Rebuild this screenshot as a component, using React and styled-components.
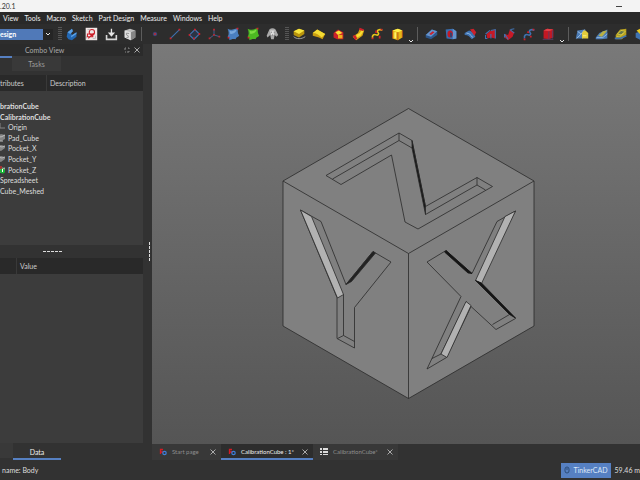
import React, {useState} from "react";
import styled, {createGlobalStyle} from "styled-components";

const menus = ["View", "Tools", "Macro", "Sketch", "Part Design", "Measure", "Windows", "Help"];

const treeItems = [
    {label: "brationCube", bold: true},
    {label: "CalibrationCube", bold: true},
    {label: "Origin", icon: "origin"},
    {label: "Pad_Cube", icon: "pad"},
    {label: "Pocket_X", icon: "pocket"},
    {label: "Pocket_Y", icon: "pocket"},
    {label: "Pocket_Z", icon: "tip"},
    {label: "Spreadsheet"},
    {label: "Cube_Meshed"},
];

const BLUE = "#3f72b0";
const RED = "#cc202a";
const YELLOW = "#e8c61c";

// toolbar drawings, all on a 16x16 grid
const icons = {
    body: (
        <>
            <path d="M3 6l5-4 1 3-2 2 1 2 5-3v5l-5 4-4-1-2-3z" fill="#2368b4"/>
            <path d="M3 6l5-4 1 3-3 3M7 10l6-4v2l-6 4z" fill="#5ba0e4"/>
        </>
    ),
    sketch: (
        <>
            <rect x="2" y="1" width="13" height="14" fill="#f1e7e7"/>
            <path d="M4 3h3M10 13h3v-3M3 13V10" stroke="#b8b8b8" fill="none"/>
            <circle cx="9" cy="6" r="3" fill="none" stroke={RED} strokeWidth="1.2"/>
            <path d="M4 8h6v3H4zM11 7l-6 6" fill="none" stroke={RED} strokeWidth="1.2"/>
        </>
    ),
    attach: (
        <>
            <path d="M3 9v5h11V9" fill="none" stroke="#d6d6d6" strokeWidth="1.8"/>
            <path d="M8.500 2v5M6 7l2.500 3L11 7z" fill="#e6e6e6" stroke="#e6e6e6" strokeWidth="1.5"/>
        </>
    ),
    cube: (
        <>
            <path d="M2 4l6-2 6 2v8l-5 3-7-3z" fill="#bdbdbd"/>
            <path d="M2 4l7 2v9l-7-3z" fill="#e0e0e0"/>
            <path d="M9 6l5-2v8l-5 3z" fill="#858585"/>
            <path d="M7 7.500L4 7v2l2 1v2H4" fill="none" stroke="#8d8d8d"/>
        </>
    ),
    point: <circle cx="8" cy="8" r="2" fill="#a52f42" stroke="#344b80"/>,
    line: (
        <>
            <path d="M3 13L13 3" stroke={BLUE} strokeWidth="1.2"/>
            <path d="M2 12h2v2H2zM12 2h2v2h-2z" fill={RED}/>
        </>
    ),
    plane: (
        <>
            <path d="M3 9l6-6 5 5-6 6z" fill="#2b3444" stroke={BLUE} strokeWidth="1.3"/>
            <path d="M2 8h2v2H2zM8 2h2v2H8zM13 7h2v2h-2zM7 12h2v2H7z" fill={RED}/>
        </>
    ),
    axes: (
        <>
            <path d="M8 9V3M8 9l-5 4M8 9l6 2" fill="none" stroke="#44669a"/>
            <path d="M7 2h2v2H7zM2 12h2v2H2zM13 10h2v2h-2zM7 8h2v2H7z" fill="#b72833"/>
        </>
    ),
    blueBinder: (
        <>
            <path d="M2 2c3 2 7 1 12-1-1 3-1 6 1 9-2 2-3 1-4 4-3-1-5 0-7 1 0-3-1-4-2-4 2-3 1-6 0-9z" fill="#4a80c0"/>
            <path d="M4 4c3 2 5 0 8-1-1 4-4 5-7 5z" fill="#79a8dc"/>
            <path d="M12 1h2v2h-2zM2 11h2v2H2z" fill={RED}/>
        </>
    ),
    greenBinder: (
        <>
            <path d="M2 2c3 2 7 1 12-1-1 3-1 6 1 9-2 2-3 1-4 4-3-1-5 0-7 1 0-3-1-4-2-4 2-3 1-6 0-9z" fill="#4cb922"/>
            <path d="M4 4c3 2 5 0 8-1-1 4-4 5-7 5z" fill="#7cdc42"/>
            <path d="M12 1h2v2h-2zM2 11h2v2H2z" fill={RED}/>
        </>
    ),
    clone: (
        <>
            <path d="M5 3c2-2 5-2 7 0l3 6-2 2-2-2-1 5H7L6 9l-3 3-1-2z" fill="#aaa"/>
            <path d="M6 4h5l-1 5H7z" fill="#ddd"/>
            <path d="M7 6h1M10 6h1M8 9h1" stroke="#666"/>
        </>
    ),
    pad: (
        <>
            <path d="M2 11c3 3 9 3 13 0" fill="none" stroke="#aaa"/>
            <path d="M2 5l6-3 6 2v4l-6 4-6-3z" fill="#b8930c"/>
            <path d="M2 5l6-3 6 2-6 4z" fill="#f6e43c"/>
        </>
    ),
    revolution: (
        <>
            <path d="M1 7l5-4 9 5-3 6-4-2-7-2z" fill="#c99d10"/>
            <path d="M1 7l5-4 9 5-4 4C8 9 5 7 1 7z" fill="#f4dc34"/>
        </>
    ),
    loftAdd: (
        <>
            <path d="M3 7l5-4 6 3v8H7l-4-2z" fill={RED}/>
            <path d="M5 6l4-2 4 3-5 2z" fill="#f8e034"/>
            <path d="M8 9h5v4H8z" fill="#eeb11c"/>
        </>
    ),
    pipeAdd: (
        <>
            <path d="M2 11l6-4 2-5 5 2-2 6-7 5z" fill="#d7a414"/>
            <path d="M10 1l5 2-2 2-4-2zM2 10l3-1 2 4-2 2z" fill={RED}/>
            <path d="M6 9l4-2 2-3 2 1-3 5-4 2z" fill="#f8e034"/>
        </>
    ),
    helixAdd: (
        <>
            <path d="M3 13c-1-4 2-5 4-4s4-1 2-3 2-4 5-2" fill="none" stroke={YELLOW} strokeWidth="1.8"/>
            <path d="M2 12h2v2H2zM6 4h2v3H6zM12 2h2v2h-2zM10 10h2v3h-2z" fill={RED}/>
        </>
    ),
    boxAdd: (
        <>
            <path d="M3 4l6-2 5 2v8l-5 3-6-2z" fill="#e7b516"/>
            <path d="M3 4l6-2 5 2-5 2z" fill="#fff04a"/>
            <path d="M9 6v9M3 4v9M14 4v8" stroke="#b54b1c"/>
            <path d="M6 6v7" stroke="#fff06b" strokeWidth="2"/>
        </>
    ),
    pocket: (
        <>
            <path d="M2 9l7-6 6 2v4l-7 5-6-2z" fill="#2c568c"/>
            <path d="M2 9l7-6 6 2-7 6z" fill="#6594cc"/>
            <path d="M6 8l4-3 2 1-4 3z" fill={RED}/>
        </>
    ),
    hole: (
        <>
            <path d="M2 3l8-1 4 3v8l-4 1-7-1z" fill="#386eaf"/>
            <path d="M10 2l4 3v8l-4 1z" fill="#6494cc"/>
            <ellipse cx="7" cy="8" rx="3" ry="4" fill="#c31926"/>
            <path d="M7 6v5l2 1V7z" fill="#274775"/>
        </>
    ),
    groove: (
        <>
            <path d="M2 7l5-3c3 1 6 3 7 7l-4 3C8 11 6 9 2 9z" fill={BLUE}/>
            <path d="M8 3l4-1 3 4-2 4z" fill={RED}/>
            <path d="M4 7c3 0 5 2 7 5" fill="none" stroke="#9bc3ed"/>
        </>
    ),
    loftCut: (
        <>
            <path d="M4 8l5-4 5-1v10l-5-1-4 1z" fill="#c71926"/>
            <path d="M3 8l5-4M9 4l5-1v10M3 9v4h2M9 8v5" fill="none" stroke={BLUE} strokeWidth="1.2"/>
        </>
    ),
    pipeCut: (
        <>
            <path d="M3 8l4 1 2-6 5 3-2 5-5 4-4-3z" fill="#c71926"/>
            <path d="M3 8l4 6M9 3l5 4M10 3l4-1M3 8v4" fill="none" stroke={BLUE} strokeWidth="1.2"/>
        </>
    ),
    helixCut: (
        <>
            <path d="M3 13c-1-4 2-5 4-4s4-1 2-3 2-4 5-2" fill="none" stroke={BLUE} strokeWidth="1.8"/>
            <path d="M2 13h2v2H2zM6 5h2v2H6zM12 2h2v2h-2zM9 10h2v2H9z" fill={RED}/>
        </>
    ),
    boxCut: (
        <>
            <path d="M3 4l4-2 7 1v9l-5 2-6-1z" fill="#c31824"/>
            <path d="M3 4l4-2 7 1-5 2z" fill="#e24047"/>
            <path d="M9 5v9M13 4v9M2 14h12" stroke="#5b3f66"/>
        </>
    ),
    fillet: (
        <>
            <path d="M1 13l2-9 8-1 2 4-4 6z" fill="#4c7cb5"/>
            <path d="M3 5l4 3 4-5M2 13l5-5" fill="none" stroke="#a4c4e5"/>
            <path d="M8 7l2-3h2l3 3v6H8z" fill="#e2cc3c"/>
            <path d="M9 10h4" stroke="#fff38a"/>
        </>
    ),
    chamfer: (
        <>
            <path d="M1 12l4-5 9-4v10l-7 1H1z" fill="#4c7cb5"/>
            <path d="M4 10l5-5 5-1-6 7z" fill="#b8b044"/>
            <path d="M2 12h7l5-4" fill="none" stroke="#92b8e0"/>
        </>
    ),
    draft: (
        <>
            <path d="M2 9l5-6 7-1v7l-5 5H2z" fill="#b7a020"/>
            <path d="M4 8l4-4 5 1-5 4zM3 11l5-1 3-3" fill="#66784a" stroke="#dccc40"/>
            <path d="M1 13h6l7-3" fill="none" stroke={BLUE} strokeWidth="2"/>
        </>
    ),
    thickness: (
        <>
            <path d="M2 7l5-2 7 2v6l-6 2-6-3z" fill={BLUE}/>
            <path d="M3 4l4-2 5 3-4 4z" fill={YELLOW}/>
        </>
    ),
};

const toolGroups = [
    {width: 74, before: "handle", names: ["body", "sketch", "attach", "cube"]},
    {width: 133, before: "line", names: ["point", "line", "plane", "axes", "blueBinder", "greenBinder", "clone"]},
    {width: 114, before: "handle", names: ["pad", "revolution", "loftAdd", "pipeAdd", "helixAdd", "boxAdd"], more: true},
    {width: 133, before: "line", names: ["pocket", "hole", "groove", "loftCut", "pipeCut", "helixCut", "boxCut"], more: true},
    {width: 75, before: "line", names: ["fillet", "chamfer", "draft", "thickness"]},
];

function TreeIcon({kind}) {
    if (kind === "origin")
        return <svg width="5" height="8" viewBox="3 0 5 8"><path d="M3 0v5h5" fill="none" stroke="#858585"/></svg>;
    if (kind === "pad")
        return (
            <svg width="5" height="8" viewBox="3 0 5 8">
                <path d="M0 2l4-2 4 1v4L4 7 0 6z" fill="#858585"/>
                <path d="M0 2l4 1 4-2M0 7h6" fill="none" stroke="#bdbdbd"/>
            </svg>
        );
    return (
        <svg width="5" height="8" viewBox="3 0 5 8">
            <path d="M0 2l4-1 4 1v2L4 7 0 6z" fill="#858585"/>
            <path d="M1 2l4 1 3-1" fill="none" stroke="#b5b5b5"/>
            {kind === "tip" && (
                <>
                    <path d="M0 0h5v3H0z" fill="#a33232"/>
                    <circle cx="5.500" cy="5" r="2.500" fill="#16b834"/>
                    <path d="M5.500 3v3" stroke="#fff"/>
                </>
            )}
        </svg>
    );
}

function FreeCadLogo() {
    return (
        <svg width="8" height="8" viewBox="0 0 8 8">
            <path d="M1.500 6V1.500H4M1.500 4H4" fill="none" stroke="#d41b24" strokeWidth="1.3"/>
            <circle cx="5.500" cy="5" r="1.700" fill="none" stroke="#3e7fda" strokeWidth="1.2"/>
        </svg>
    );
}

function SheetLogo() {
    return (
        <svg width="8" height="8" viewBox="0 0 8 8">
            <path d="M0 0h2v2H0zM3 0h5v2H3zM0 3h2v2H0zM3 3h5v2H3zM0 6h2v1H0zM3 6h5v1H3z" fill="#ddd"/>
        </svg>
    );
}

function Close() {
    return <svg width="6" height="6" viewBox="0 0 6 6"><path d="M0.500 0.500l5 5M5.500 0.500l-5 5" stroke="#aaa"/></svg>;
}

function Chevron() {
    return <svg width="6" height="4" viewBox="0 0 6 4"><path d="M1 1l2 2 2-2" fill="none" stroke="#e8e8e8"/></svg>;
}

function Cube() {
    return (
        <Scene viewBox="152 44 488 400" preserveAspectRatio="xMidYMid slice" role="img" aria-label="Calibration cube">
            <g fill="#808080" stroke="#2a2a2a" strokeWidth="0.8" strokeLinejoin="round">
                <path d="M283 181L408.500 108.500 534 181V326L408.500 398.500 283 326z"/>
                <path d="M283 181l125.500 72.500L534 181M408.500 253.500v145" fill="none"/>

                {/* Z on the top face */}
                <path d="M326 175.500L399 133l13 7.500 13.500 66L477 177.500l15.500 9-74.500 42.500-13-7-13.500-67L341 184.500z"/>
                <path d="M332.500 179L399 140.500l13 7.500M399 133v7.500M425.500 214.500L477 185l8.500 5M477 177.500v7.500" fill="none"/>
                <path d="M412 140.500v7.500l13.500 66.500v-8z" fill="#151515"/>

                {/* Y on the left face */}
                <path d="M300.500 210l20.500 11.500 25 63 27-33 18 10.500-36.500 45.500v40.500l-17.500-9.500v-41z"/>
                <path d="M343.500 294v41.500l11 6M343.500 335.500l-6 3" fill="none"/>
                <path d="M300.500 210l11 6.500 32 78-6 3.500z" fill="#b2b2b2"/>
                <path d="M346 284.500l27-33 2.500 1.500-24 28.500z" fill="#222"/>

                {/* X on the right face */}
                <path d="M515.500 211L497 221.500l-25 52-26-23-19 11.500 34 34.500-34 72.500 19.500-11.500 24.500-51 25 23 19.500-11-38.500-37.500z"/>
                <path d="M441 354l-9 4.500M466.500 301.500L441 354M492.500 324.500l17-10" fill="none"/>
                <path d="M515.500 211l-10.500 5.500-29.500 64 6 3z" fill="#b2b2b2"/>
                <path d="M466 301.500l5 4-24 52-6-3.500z" fill="#b2b2b2"/>
                <path d="M446 250.500l-1.500 1.500 23.500 21 4 .500zM475.500 280.500l6 2.500 34 35-6-3.500z" fill="#151515" stroke="#151515"/>
            </g>
        </Scene>
    );
}

function App() {
    const [doc, setDoc] = useState(1);
    const docs = [
        {label: "Start page", logo: <FreeCadLogo/>, width: 69},
        {label: "CalibrationCube : 1*", logo: <FreeCadLogo/>, width: 92},
        {label: "CalibrationCube*", logo: <SheetLogo/>, width: 85},
    ];

    return (
        <Window>
            <GlobalStyle/>
            <TitleBar>
                <span>.20.1</span>
                <MinimizeButton aria-label="Minimize"/>
            </TitleBar>
            <MenuBar>
                {menus.map((menu) => <MenuItem key={menu}>{menu}</MenuItem>)}
            </MenuBar>
            <ToolBar>
                <WorkbenchBox>
                    <WorkbenchSelect aria-label="Workbench">
                        <option>esign</option>
                    </WorkbenchSelect>
                    <SelectArrow><Chevron/></SelectArrow>
                </WorkbenchBox>
                {toolGroups.map((group, index) => (
                    <React.Fragment key={index}>
                        {group.before === "handle" ? <Handle/> : <Separator/>}
                        <ToolGroup $width={group.width}>
                            {group.names.map((name) => (
                                <ToolButton key={name} aria-label={name}>
                                    <svg width="16" height="16" viewBox="-1 -1 18 18">{icons[name]}</svg>
                                </ToolButton>
                            ))}
                        </ToolGroup>
                        {group.more && <MoreButton aria-label="More"><Chevron/></MoreButton>}
                    </React.Fragment>
                ))}
            </ToolBar>
            <Main>
                <SidePanel>
                    <DockTitle>
                        <span>Combo View</span>
                        <DockButtons>
                            <DockButton aria-label="Float">
                                <svg width="6" height="6" viewBox="0 0 6 6"><path d="M1 3V1h1M4 1h1v1M5 4v1H3M1 5h1" fill="none" stroke="#888"/></svg>
                            </DockButton>
                            <DockButton aria-label="Close"><Close/></DockButton>
                        </DockButtons>
                    </DockTitle>
                    <DockTabs>
                        <DockTab $active $width={12} aria-label="Model"/>
                        <DockTab $width={49}>Tasks</DockTab>
                    </DockTabs>
                    <HeaderRow $first={47}>
                        <HeaderCell $divided>tributes</HeaderCell>
                        <HeaderCell>Description</HeaderCell>
                    </HeaderRow>
                    <Tree>
                        {treeItems.map((item, index) => (
                            <TreeRow key={index} $bold={item.bold}>
                                {item.icon && <TreeIcon kind={item.icon}/>}
                                {item.label}
                            </TreeRow>
                        ))}
                    </Tree>
                    <Splitter><Dashes/></Splitter>
                    <HeaderRow $first={17}>
                        <HeaderCell $divided/>
                        <HeaderCell>Value</HeaderCell>
                    </HeaderRow>
                    <Properties/>
                    <PropertyTabs>
                        <PropertyTab $width={13} aria-label="View"/>
                        <PropertyTab $width={48} $active>Data</PropertyTab>
                    </PropertyTabs>
                </SidePanel>
                <SideSplitter><Dashes $vertical/></SideSplitter>
                <Workspace>
                    <Viewport><Cube/></Viewport>
                    <DocTabs>
                        {docs.map((item, index) => (
                            <DocTab key={item.label} $width={item.width} $active={index === doc} onClick={() => setDoc(index)}>
                                {item.logo}
                                <DocName>{item.label}</DocName>
                                <Close/>
                            </DocTab>
                        ))}
                    </DocTabs>
                </Workspace>
            </Main>
            <StatusBar>
                <StatusText>name: Body</StatusText>
                <NavButton>
                    <svg width="6" height="8" viewBox="0 0 6 8"><rect x="1" y="1" width="4" height="6" rx="2" fill="none" stroke="#2c4c78"/><path d="M3 2v2" stroke="#2c4c78"/></svg>
                    TinkerCAD
                </NavButton>
                <Dimension>59.46 m</Dimension>
            </StatusBar>
        </Window>
    );
}

const GlobalStyle = createGlobalStyle`
    * {
        box-sizing: border-box;
    }

    body {
        margin: 0;
        overflow: hidden;
    }

    button, select {
        margin: 0;
        padding: 0;
        border: none;
        background: none;
        color: inherit;
        font: inherit;
    }

    svg {
        flex: none;
        display: block;
    }
`;

const Window = styled.div`
    display: flex;
    flex-direction: column;
    height: 100vh;
    overflow: hidden;
    background-color: #323232;
    color: #dedede;
    font-family: Lato, "Open Sans", sans-serif;
    font-size: 7px;
    line-height: 10px;
    white-space: nowrap;
`;

const TitleBar = styled.header`
    display: flex;
    align-items: center;
    justify-content: space-between;
    flex: none;
    height: 12px;
    padding-right: 18px;
    background-color: #f3f3f3;
    color: #333;
`;

const MinimizeButton = styled.button`
    width: 6px;
    height: 1px;
    background-color: #444;
`;

const MenuBar = styled.nav`
    display: flex;
    gap: 6px;
    flex: none;
    height: 12px;
    padding-left: 3px;
    background-color: #292929;
    color: #eee;
`;

const MenuItem = styled.button`
    height: 12px;
`;

const ToolBar = styled.div`
    display: flex;
    align-items: center;
    flex: none;
    height: 20px;
    overflow: hidden;
    background-color: #2d2d2d;
`;

const WorkbenchBox = styled.div`
    display: flex;
    align-items: center;
    flex: none;
    width: 53px;
`;

const WorkbenchSelect = styled.select`
    appearance: none;
    flex: 1;
    height: 11px;
    border-radius: 0;
    background-color: #5079b8;
    color: #fff;
    font-weight: bold;
`;

const SelectArrow = styled.span`
    display: flex;
    align-items: center;
    justify-content: center;
    flex: none;
    width: 10px;
    height: 11px;
    background-color: #252525;
`;

const Handle = styled.span`
    flex: none;
    width: 4px;
    height: 14px;
    margin-left: 5px;
    background: repeating-linear-gradient(#555 0 1px, transparent 1px 2px);
`;

const Separator = styled.span`
    flex: none;
    width: 1px;
    height: 14px;
    margin: 0 3px;
    background-color: #5c5c5c;
`;

const ToolGroup = styled.div`
    display: flex;
    justify-content: space-between;
    flex: none;
    width: ${({$width}) => $width}px;
    margin-left: 2px;
`;

const ToolButton = styled.button`
    width: 16px;
    height: 16px;
`;

const MoreButton = styled.button`
    align-self: flex-end;
    flex: none;
    width: 6px;
    height: 6px;
    margin-left: 3px;
`;

const Main = styled.main`
    display: flex;
    flex: 1;
    min-height: 0;
`;

const SidePanel = styled.aside`
    display: flex;
    flex-direction: column;
    flex: none;
    width: 143px;
    overflow: hidden;
`;

const DockTitle = styled.div`
    display: flex;
    justify-content: center;
    align-items: center;
    height: 12px;
    padding-left: 25px;
    background-color: #2b2b2b;
    color: #aaa;
`;

const DockButtons = styled.div`
    display: flex;
    gap: 4px;
    margin-left: auto;
    padding-right: 3px;
`;

const DockButton = styled.button`
    width: 6px;
    height: 6px;
`;

const DockTabs = styled.div`
    display: flex;
    height: 19px;
    padding-bottom: 4px;
`;

const DockTab = styled.button`
    width: ${({$width}) => $width}px;
    padding-bottom: 2px;
    border-top: 2px solid ${({$active}) => $active ? "#5680c2" : "#393939"};
    background-color: ${({$active}) => $active ? "#323232" : "#393939"};
    color: #9c9c9c;
`;

const HeaderRow = styled.div`
    display: grid;
    grid-template-columns: ${({$first}) => $first}px 1fr;
    flex: none;
    height: 16px;
    background-color: #292929;
    color: #ccc;
`;

const HeaderCell = styled.div`
    display: flex;
    align-items: center;
    padding-left: ${({$divided}) => $divided ? 0 : 3}px;
    border-right: ${({$divided}) => $divided ? "1px solid #393939" : "none"};
`;

const Tree = styled.ul`
    display: grid;
    grid-auto-rows: 1fr;
    height: 154px;
    margin: 0;
    padding: 10px 0 49px;
    background-color: #3c3c3c;
    list-style: none;
`;

const TreeRow = styled.li`
    display: flex;
    align-items: center;
    gap: 3px;
    font-weight: ${({$bold}) => $bold ? "bold" : "normal"};
`;

const Splitter = styled.div`
    display: flex;
    align-items: center;
    justify-content: center;
    height: 13px;
    padding-right: 37px;
`;

const Dashes = styled.span`
    width: ${({$vertical}) => $vertical ? 1 : 20}px;
    height: ${({$vertical}) => $vertical ? 20 : 1}px;
    background: repeating-linear-gradient(${({$vertical}) => $vertical ? "180deg" : "90deg"}, #ddd 0 3px, transparent 3px 4px);
`;

const Properties = styled.div`
    flex: 1;
    background-color: #3c3c3c;
`;

const PropertyTabs = styled.div`
    display: flex;
    height: 17px;
`;

const PropertyTab = styled.button`
    width: ${({$width}) => $width}px;
    padding-top: 2px;
    border-bottom: 2px solid ${({$active}) => $active ? "#5680c2" : "#323232"};
    background-color: ${({$active}) => $active ? "#323232" : "#393939"};
    color: #eee;
`;

const SideSplitter = styled.div`
    display: flex;
    align-items: center;
    justify-content: center;
    flex: none;
    width: 9px;
    padding-left: 4px;
`;

const Workspace = styled.section`
    display: flex;
    flex-direction: column;
    flex: 1;
    min-width: 0;
`;

const Viewport = styled.div`
    flex: 1;
    min-height: 0;
    background: linear-gradient(#797979, #555);
`;

const Scene = styled.svg`
    width: 100%;
    height: 100%;
`;

const DocTabs = styled.div`
    display: flex;
    height: 16px;
`;

const DocTab = styled.button`
    display: flex;
    align-items: center;
    width: ${({$width}) => $width}px;
    padding: 2px 5px 0 7px;
    border-bottom: 2px solid ${({$active}) => $active ? "#5680c2" : "#383838"};
    background-color: ${({$active}) => $active ? "#2d2d2d" : "#383838"};
    color: ${({$active}) => $active ? "#eee" : "#8e8e8e"};
    font-size: 6px;
    text-align: left;
`;

const DocName = styled.span`
    flex: 1;
    padding-left: 5px;
`;

const StatusBar = styled.footer`
    display: flex;
    align-items: center;
    flex: none;
    height: 20px;
    padding-left: 2px;
`;

const StatusText = styled.span`
    flex: 1;
`;

const NavButton = styled.button`
    display: flex;
    align-items: center;
    justify-content: center;
    gap: 4px;
    width: 50px;
    height: 15px;
    background-color: #5680c2;
    color: #dbe7f8;
`;

const Dimension = styled.span`
    margin-left: 4px;
`;

export default App;
